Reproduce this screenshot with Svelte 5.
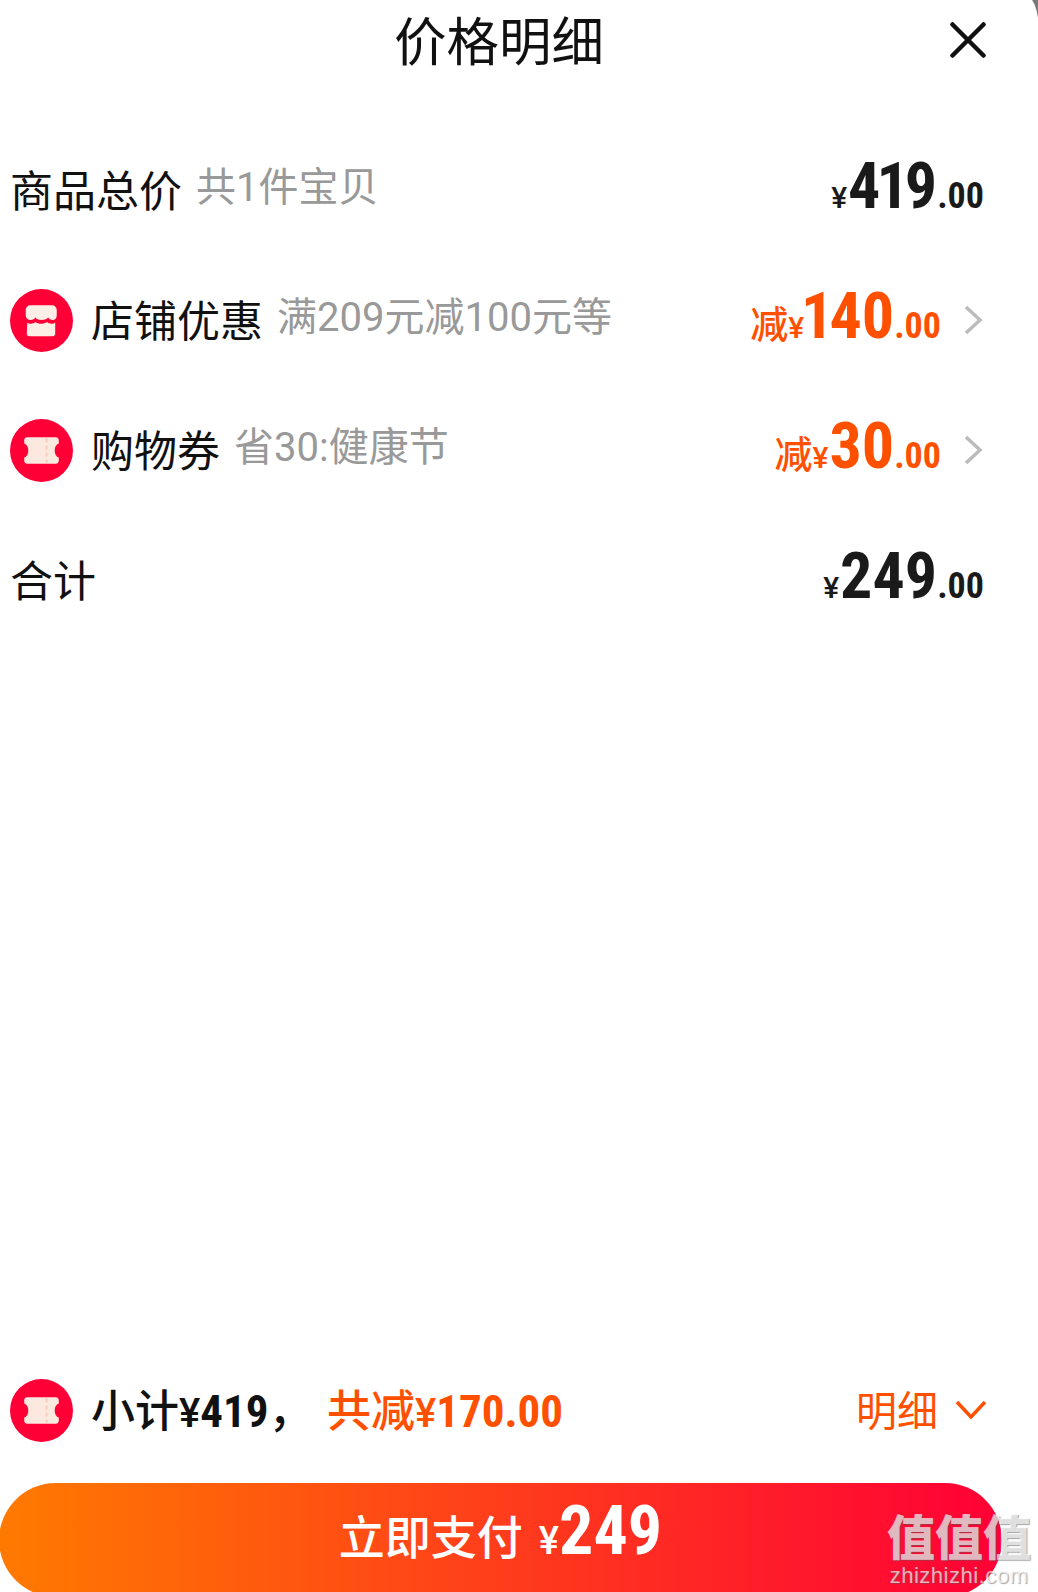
<script>
  const rows = [
    { label: '商品总价', note: '共1件宝贝', big: '419', icon: null },
    { label: '店铺优惠', note: '满209元减100元等', big: '140', icon: 'shop', off: true },
    { label: '购物券', note: '省30:健康节', big: '30', icon: 'ticket', off: true },
    { label: '合计', note: '', big: '249', icon: null }
  ];
</script>

{#snippet badge(kind)}
  <svg class="badge" viewBox="0 0 62 62" aria-hidden="true">
    <circle cx="31" cy="31" r="31" fill="#ff0036" />
    {#if kind === 'shop'}
      <path d="M20 16h21c3 0 5 2 5 5v5c0 3-2 4.500-4 4.500s-3.500-1-4.500-2.500c-1 1.500-3 2.500-6.500 2.500s-5-1-6-2.500c-1 1.500-2.500 2.500-4.500 2.500s-5-1.500-5-4.500v-5c0-3 2-5 5-5z" fill="#fdeee6" />
      <path d="M17 33c1 .8 2 1.200 3.500 1.200 2 0 3.500-.8 4.500-1.700 1.500 1.200 3.500 1.700 5.500 1.700s4.500-.5 6-1.700c1 .9 2.500 1.700 4.500 1.700 1.500 0 2.500-.4 3.500-1.200v11c0 1.500-1 2.500-2.500 2.500h-23c-1.500 0-2.500-1-2.500-2.500z" fill="#fdeee6" />
    {:else}
      <path d="M17 18h28c1.800 0 3 1.200 3 3v3c-2.500.8-4 3.500-4 7s1.500 6.200 4 7v3c0 1.800-1.200 3-3 3H17c-1.800 0-3-1.200-3-3v-3c2.500-.8 4-3.500 4-7s-1.500-6.200-4-7v-3c0-1.800 1.200-3 3-3z" fill="#fbe8de" />
      <path d="M36 19v24" stroke="#f6cdb8" stroke-width="2" stroke-dasharray="4 3" fill="none" />
    {/if}
  </svg>
{/snippet}

<div class="sheet">
  <header>
    <h1>价格明细</h1>
    <svg class="close" viewBox="0 0 36 36" aria-hidden="true">
      <path d="M2.500 2.500l31 31M33.500 2.500l-31 31" stroke="#111" stroke-width="4.500" stroke-linecap="round" fill="none" />
    </svg>
  </header>

  <div class="list">
    {#each rows as row}
      <div class="row">
        {#if row.icon}{@render badge(row.icon)}{/if}
        <span class="label">{row.label}</span>
        {#if row.note}<span class="note">{row.note}</span>{/if}
        <div class="price" class:off={row.off} class:end={!row.off}>
          {#if row.off}<span class="jian">减</span>{/if}<span class="yen">¥</span><span class="big">{#each row.big as d}<span class:one={d === '1'}>{d}</span>{/each}</span><span class="cents">.00</span>
        </div>
        {#if row.off}
          <svg class="more" viewBox="0 0 20 32" aria-hidden="true">
            <path d="M3 3l14 13L3 29" stroke="#bbb" stroke-width="3.500" fill="none" />
          </svg>
        {/if}
      </div>
    {/each}
  </div>

  <footer>
    <div class="summary">
      {@render badge('ticket')}
      <span class="sub">小计<i>¥</i><b>419</b>，</span>
      <span class="total">共减<i>¥</i><b>170.00</b></span>
      <span class="detail">明细</span>
      <svg class="down" viewBox="0 0 32 22" aria-hidden="true">
        <path d="M2 3l14 15L30 3" stroke="#ff5000" stroke-width="3.500" fill="none" />
      </svg>
    </div>
    <button>立即支付<span class="pay-yen">¥</span><span class="pay-big">249</span></button>
  </footer>

  <svg class="corner" viewBox="0 0 6 18" aria-hidden="true">
    <path d="M0 0h6v18C5 11 3 4 0 0z" fill="#777" />
  </svg>
  <div class="mark">
    <div class="mark-cn">值值值</div>
    <div class="mark-en">zhizhizhi.com</div>
  </div>
</div>

<style>
  :global(body) {
    margin: 0;
    background: #fff;
  }
  .sheet {
    position: relative;
    width: 1038px;
    height: 1592px;
    overflow: hidden;
    display: flex;
    flex-direction: column;
    background: #fff;
    color: #111;
    font-family: "Noto Sans CJK SC", "Noto Sans", sans-serif;
  }
  header {
    position: relative;
    height: 80px;
    flex: none;
    display: flex;
    align-items: center;
    justify-content: center;
    padding-right: 40px;
  }
  h1 {
    margin: 0;
    font-size: 52.5px;
    font-weight: 400;
    line-height: 76px;
    height: 80px;
  }
  .close {
    position: absolute;
    right: 52px;
    top: 22px;
    width: 36px;
    height: 36px;
  }
  .list {
    padding-top: 45px;
  }
  .row {
    height: 130px;
    padding: 0 53px 0 10px;
    display: flex;
    align-items: center;
  }
  .badge {
    width: 63px;
    height: 63px;
    flex: none;
    margin-right: 18px;
  }
  .label {
    font-size: 43px;
    line-height: 60px;
    padding-bottom: 5px;
  }
  .note {
    margin-left: 14px;
    font-family: Roboto, "Noto Sans CJK SC", sans-serif;
    font-size: 40px;
    line-height: 60px;
    color: #999;
    padding-bottom: 5px;
  }
  .price {
    margin-left: auto;
    display: flex;
    align-items: baseline;
    padding-bottom: 8px;
    font-family: "Liberation Sans Narrow", "Roboto Condensed", Roboto, sans-serif;
    color: #1a1a1a;
  }
  .price.end {
    margin-right: 1px;
  }
  .price.off {
    color: #ff5000;
  }
  .jian {
    font-family: "Noto Sans CJK SC", sans-serif;
    font-size: 38px;
    font-weight: 500;
  }
  .yen {
    font-family: Roboto, sans-serif;
    font-size: 30px;
    font-weight: 500;
    margin-right: 1px;
  }
  .big {
    font-size: 64px;
    font-weight: 700;
  }
  .one {
    margin: 0 -4px;
  }
  .cents {
    font-size: 36px;
    font-weight: 700;
  }
  .more {
    width: 20px;
    height: 32px;
    margin-left: 22px;
    margin-right: 2px;
    flex: none;
  }
  footer {
    margin-top: auto;
    height: 213px;
    flex: none;
  }
  .summary {
    height: 62px;
    padding: 0 51px 0 10px;
    display: flex;
    align-items: center;
  }
  .sub,
  .total,
  .detail {
    padding-bottom: 5px;
  }
  .sub {
    font-size: 44px;
    font-weight: 500;
    width: 236px;
    white-space: nowrap;
  }
  .total {
    font-size: 44px;
    font-weight: 500;
    color: #ff5000;
  }
  .sub i,
  .total i {
    font-family: Roboto, sans-serif;
    font-style: normal;
    font-size: 40px;
    font-weight: 500;
  }
  .sub b,
  .total b {
    font-family: "Liberation Sans Narrow", "Roboto Condensed", Roboto, sans-serif;
    font-weight: 700;
    font-size: 45px;
  }
  .detail {
    margin-left: auto;
    font-size: 41px;
    color: #ff5000;
  }
  .down {
    width: 32px;
    height: 22px;
    margin-left: 17px;
  }
  button {
    display: flex;
    align-items: baseline;
    justify-content: center;
    width: 1003px;
    height: 114px;
    margin: 42px 0 0 -1px;
    padding: 8px 0 0 0;
    border: 0;
    border-radius: 57px;
    background: linear-gradient(90deg, #ff7a00, #ff0036);
    color: #fff;
    font-family: "Noto Sans CJK SC", sans-serif;
    font-size: 46px;
    font-weight: 500;
  }
  .pay-yen {
    margin-left: 16px;
    font-family: Roboto, sans-serif;
    font-size: 38px;
    font-weight: 500;
  }
  .pay-big {
    font-family: "Liberation Sans Narrow", "Roboto Condensed", Roboto, sans-serif;
    font-size: 68px;
    font-weight: 700;
  }
  .corner {
    position: absolute;
    right: 0;
    top: 0;
    width: 6px;
    height: 18px;
  }
  .mark {
    position: absolute;
    left: 886px;
    top: 1504px;
    width: 146px;
    color: rgba(255, 255, 255, 0.68);
    text-shadow: 1px 1px 1px rgba(90, 90, 90, 0.55);
    text-align: center;
  }
  .mark-cn {
    font-size: 48px;
    font-weight: 900;
    line-height: 60px;
    white-space: nowrap;
  }
  .mark-en {
    font-family: "Liberation Sans", sans-serif;
    font-size: 22px;
    line-height: 24px;
    letter-spacing: 0.5px;
  }
</style>
